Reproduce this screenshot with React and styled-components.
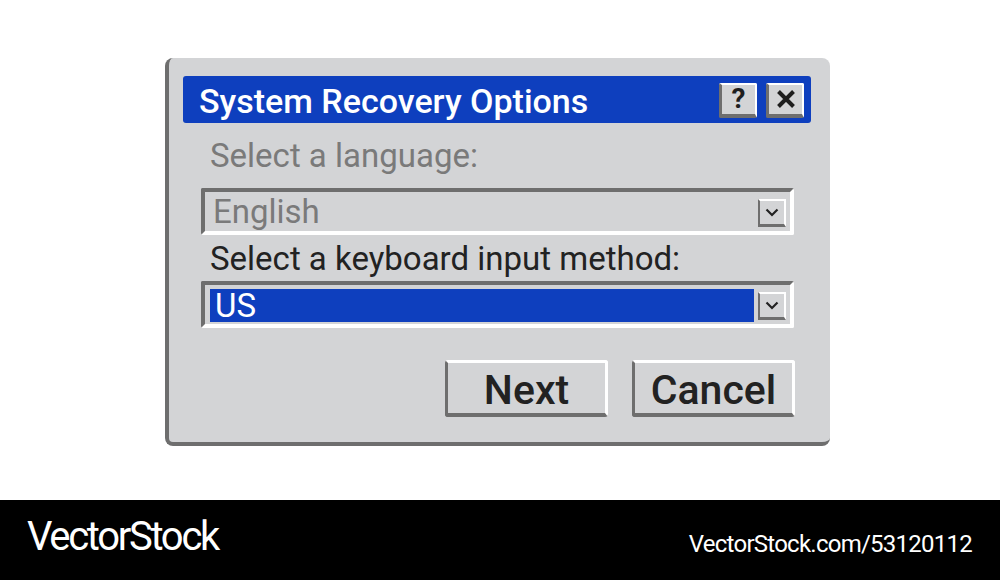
import React from 'react';
import styled, { createGlobalStyle } from 'styled-components';

const GlobalStyle = createGlobalStyle`
  html, body {
    margin: 0;
    padding: 0;
    background: #ffffff;
  }
  body {
    font-family: Roboto, "Liberation Sans", sans-serif;
  }
  * {
    box-sizing: border-box;
  }
`;

const DARK = '#6e6e6e';
const FACE = '#d3d4d6';
const BLUE = '#0e3fbe';

const ChevronIcon = () => (
  <svg width="14" height="9" viewBox="0 0 14 9">
    <path d="M1.5 1.5 L7 7 L12.5 1.5" fill="none" stroke="#222" strokeWidth="2.2" />
  </svg>
);

const CloseIcon = () => (
  <svg width="20" height="20" viewBox="0 0 20 20">
    <path d="M2.5 2.5 L17.5 17.5 M17.5 2.5 L2.5 17.5" stroke="#1e1e1e" strokeWidth="4" />
  </svg>
);

const Dropdown = ({ value, selected }) => (
  <Combo>
    <ComboValue $selected={selected}>{value}</ComboValue>
    <ArrowButton>
      <ChevronIcon />
    </ArrowButton>
  </Combo>
);

const App = () => {
  return (
    <>
      <GlobalStyle />
      <Page>
        <Stage>
          <Dialog>
            <TitleBar>
              <Title>System Recovery Options</Title>
              <TitleButtons>
                <TitleButton>?</TitleButton>
                <TitleButton>
                  <CloseIcon />
                </TitleButton>
              </TitleButtons>
            </TitleBar>
            <Body>
              <Label $muted $top={15}>Select a language:</Label>
              <Dropdown value="English" />
              <Label $top={6}>Select a keyboard input method:</Label>
              <Dropdown value="US" selected />
              <Actions>
                <PushButton>Next</PushButton>
                <PushButton>Cancel</PushButton>
              </Actions>
            </Body>
          </Dialog>
        </Stage>
        <Footer>
          <Brand>VectorStock</Brand>
          <StockId>VectorStock.com/53120112</StockId>
        </Footer>
      </Page>
    </>
  );
};

const Page = styled.div`
  width: 1000px;
  height: 580px;
  display: flex;
  flex-direction: column;
  overflow: hidden;
`;

const Stage = styled.main`
  height: 500px;
  padding: 58px 0 0 165px;
`;

const Dialog = styled.section`
  width: 665px;
  height: 388px;
  background: ${FACE};
  border-left: 4px solid ${DARK};
  border-bottom: 4px solid ${DARK};
  border-radius: 8px;
  padding: 18px 19px 0 14px;
  display: flex;
  flex-direction: column;
`;

const TitleBar = styled.header`
  height: 47px;
  background: ${BLUE};
  border-radius: 3px;
  display: flex;
  align-items: center;
  justify-content: space-between;
  padding: 0 7px 0 16px;
`;

const Title = styled.h1`
  margin: 0;
  color: #ffffff;
  font-size: 34px;
  font-weight: 500;
  line-height: 1;
  padding-top: 2px;
`;

const TitleButtons = styled.div`
  display: flex;
  gap: 9px;
  padding-top: 1px;
`;

const bevel = `
  background: ${FACE};
  border-style: solid;
  border-top-color: #ffffff;
  border-right-color: #ffffff;
  border-left-color: ${DARK};
  border-bottom-color: ${DARK};
`;

const TitleButton = styled.div`
  ${bevel}
  width: 38px;
  height: 35px;
  border-width: 2px 2px 4px 3px;
  border-radius: 2px;
  display: flex;
  align-items: center;
  justify-content: center;
  color: #1e1e1e;
  font-size: 28px;
  font-weight: 700;
  line-height: 1;
`;

const Body = styled.div`
  padding: 0 17px 0 18px;
  display: flex;
  flex-direction: column;
`;

const Label = styled.div`
  margin-top: ${(p) => p.$top}px;
  padding-left: 9px;
  font-size: 33px;
  line-height: 36px;
  color: ${(p) => (p.$muted ? '#7a7a7a' : '#222222')};
  margin-bottom: ${(p) => (p.$muted ? 14 : 4)}px;
`;

const Combo = styled.div`
  height: 47px;
  border-style: solid;
  border-width: 4px;
  border-top-color: ${DARK};
  border-left-color: ${DARK};
  border-right-color: #ffffff;
  border-bottom-color: #ffffff;
  border-radius: 2px;
  background: ${FACE};
  display: flex;
  align-items: center;
  gap: 4px;
  padding: 0 4px 0 5px;
`;

const ComboValue = styled.div`
  flex: 1;
  align-self: stretch;
  margin: ${(p) => (p.$selected ? '4px 0 2px 0' : '0')};
  padding-left: ${(p) => (p.$selected ? 5 : 3)}px;
  background: ${(p) => (p.$selected ? BLUE : 'transparent')};
  color: ${(p) => (p.$selected ? '#ffffff' : '#7a7a7a')};
  font-size: 33px;
  display: flex;
  align-items: center;
  line-height: 1;
`;

const ArrowButton = styled.div`
  ${bevel}
  width: 28px;
  height: 28px;
  border-width: 2px 2px 3px 2px;
  display: flex;
  align-items: center;
  justify-content: center;
  margin-top: 2px;
`;

const Actions = styled.div`
  margin-top: 32px;
  margin-right: -1px;
  display: flex;
  justify-content: flex-end;
  gap: 24px;
`;

const PushButton = styled.button`
  ${bevel}
  width: 163px;
  height: 57px;
  border-width: 3px 3px 4px 3px;
  border-radius: 3px;
  font-family: Roboto, "Liberation Sans", sans-serif;
  font-size: 41px;
  font-weight: 500;
  color: #222222;
  padding: 4px 0 0 0;
  line-height: 1;
`;

const Footer = styled.footer`
  height: 80px;
  background: #000000;
  display: flex;
  align-items: center;
  justify-content: space-between;
  padding: 0 28px 0 27px;
  color: #ffffff;
`;

const Brand = styled.div`
  font-size: 40px;
  letter-spacing: -2.3px;
  line-height: 1;
  padding-bottom: 6px;
`;

const StockId = styled.div`
  font-size: 24px;
  letter-spacing: -0.75px;
  line-height: 1;
  padding-top: 8px;
`;

export default App;
